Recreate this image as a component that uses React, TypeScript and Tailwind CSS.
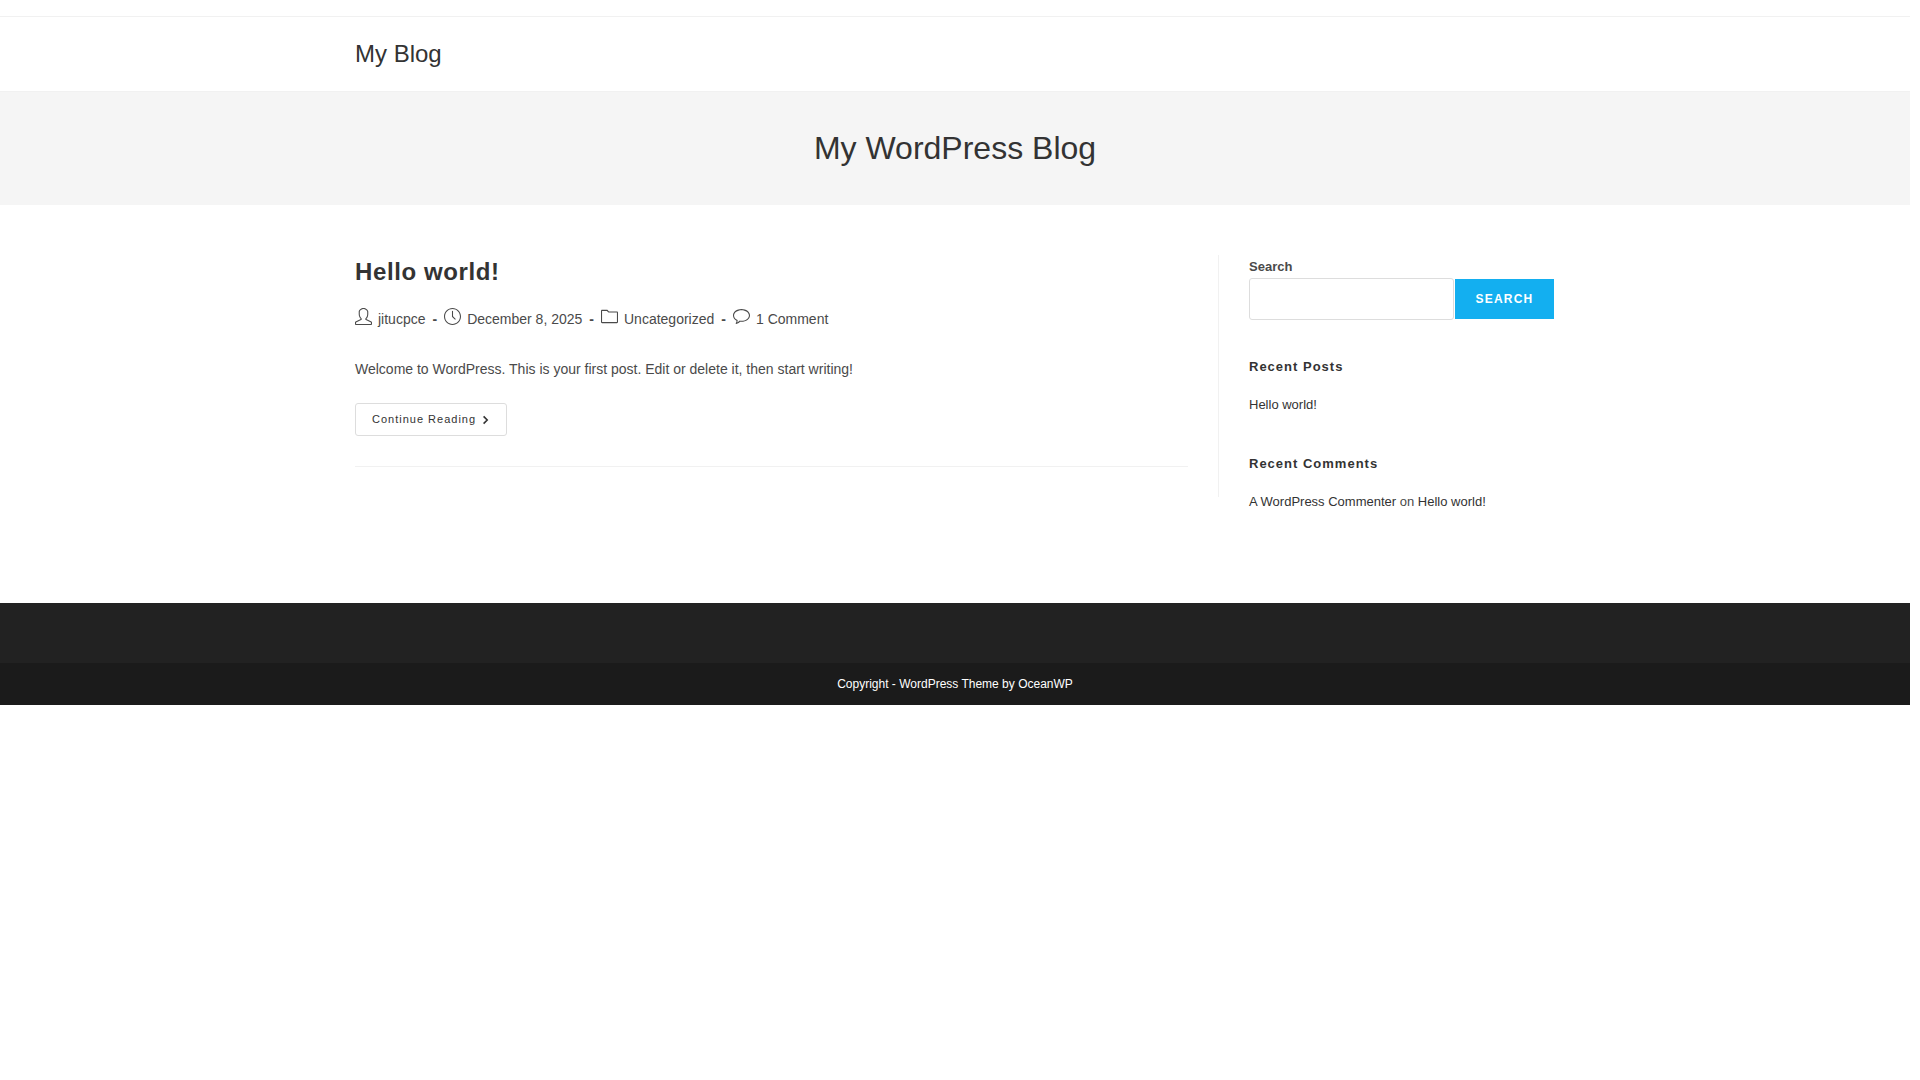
import { SlBubble, SlClock, SlFolder, SlUser } from "react-icons/sl";

const postMeta = [
  { icon: SlUser, text: "jitucpce", href: "#author" },
  { icon: SlClock, text: "December 8, 2025" },
  { icon: SlFolder, text: "Uncategorized", href: "#uncategorized" },
  { icon: SlBubble, text: "1 Comment", href: "#comments" },
];

function Header() {
  return (
    <>
      <div className="h-[17px] border-b border-[#f1f1f1]"></div>
      <header className="border-b border-[#f1f1f1]">
        <div className="max-w-[1200px] mx-auto">
          <a href="#home" className="text-2xl leading-[74px] text-[#333333]">
            My Blog
          </a>
        </div>
      </header>
    </>
  );
}

function PageHeader() {
  return (
    <div className="bg-[#f5f5f5] py-[34px] text-center">
      <h1 className="text-[32px] leading-[45px] text-[#333333]">
        My WordPress Blog
      </h1>
    </div>
  );
}

function Post() {
  return (
    <article className="pb-[30px] mb-[30px] border-b border-[#f1f1f1]">
      <h2 className="text-2xl leading-[34px] font-bold tracking-wide text-[#333333]">
        <a href="#post">Hello world!</a>
      </h2>

      <ul className="mt-5 flex flex-wrap text-sm leading-5">
        {postMeta.map((item, index) => (
          <li key={item.text} className="flex">
            <item.icon className="size-[17px] mr-[6px] -mt-px" />
            {item.href ? <a href={item.href}>{item.text}</a> : item.text}
            {index < postMeta.length - 1 && (
              <span className="px-[7px] font-bold">-</span>
            )}
          </li>
        ))}
      </ul>

      <p className="mt-[27px] text-sm leading-[26px]">
        Welcome to WordPress. This is your first post. Edit or delete it, then
        start writing!
      </p>

      <a
        href="#post"
        className="mt-[21px] inline-flex h-[33px] items-center gap-[6px] rounded-[3px] border border-[#dddddd] px-4 text-[11px] tracking-[1px] text-[#333333] align-top"
      >
        Continue Reading
        <svg viewBox="0 0 8 10" className="w-2 h-[10px]" fill="none">
          <path d="M1.6 1.4 5.2 5 1.6 8.6" stroke="currentColor" strokeWidth="1.6" />
        </svg>
      </a>
    </article>
  );
}

function Sidebar() {
  return (
    <aside className="w-[28%] pl-[30px] text-[13px] flex flex-col gap-10">
      <form>
        <label htmlFor="search" className="block font-bold leading-6">
          Search
        </label>
        <div className="flex h-10 items-center">
          <input
            id="search"
            type="search"
            className="h-[42px] min-w-0 flex-1 rounded-[3px] border border-[#dddddd] px-2"
          />
          <button
            type="submit"
            className="mx-px h-10 w-[99px] bg-[#13aff0] text-xs font-bold tracking-widest text-white"
          >
            SEARCH
          </button>
        </div>
      </form>

      <section>
        <h3 className="mb-5 font-bold leading-[15px] tracking-[1px] text-[#333333]">
          Recent Posts
        </h3>
        <ul className="leading-[22px]">
          <li>
            <a href="#post" className="text-[#333333]">
              Hello world!
            </a>
          </li>
        </ul>
      </section>

      <section>
        <h3 className="mb-5 font-bold leading-[15px] tracking-[1px] text-[#333333]">
          Recent Comments
        </h3>
        <ul className="leading-[22px]">
          <li>
            <a href="#commenter" className="text-[#333333]">
              A WordPress Commenter
            </a>{" "}
            on{" "}
            <a href="#comment-1" className="text-[#333333]">
              Hello world!
            </a>
          </li>
        </ul>
      </section>
    </aside>
  );
}

export default function App() {
  return (
    <div className="mr-[10px] bg-white font-['Liberation_Sans',Arial,sans-serif] text-[#4a4a4a]">
      <Header />
      <PageHeader />

      <main className="max-w-[1200px] mx-auto pt-[50px] pb-[90px] flex items-start">
        <div className="w-[72%] border-r border-[#f1f1f1] pr-[30px] flow-root">
          <Post />
        </div>
        <Sidebar />
      </main>

      <footer>
        <div className="h-[60px] bg-[#222222]"></div>
        <div className="bg-[#1b1b1b] py-[15px] text-center text-xs leading-3 text-white">
          Copyright - WordPress Theme by OceanWP
        </div>
      </footer>
    </div>
  );
}
